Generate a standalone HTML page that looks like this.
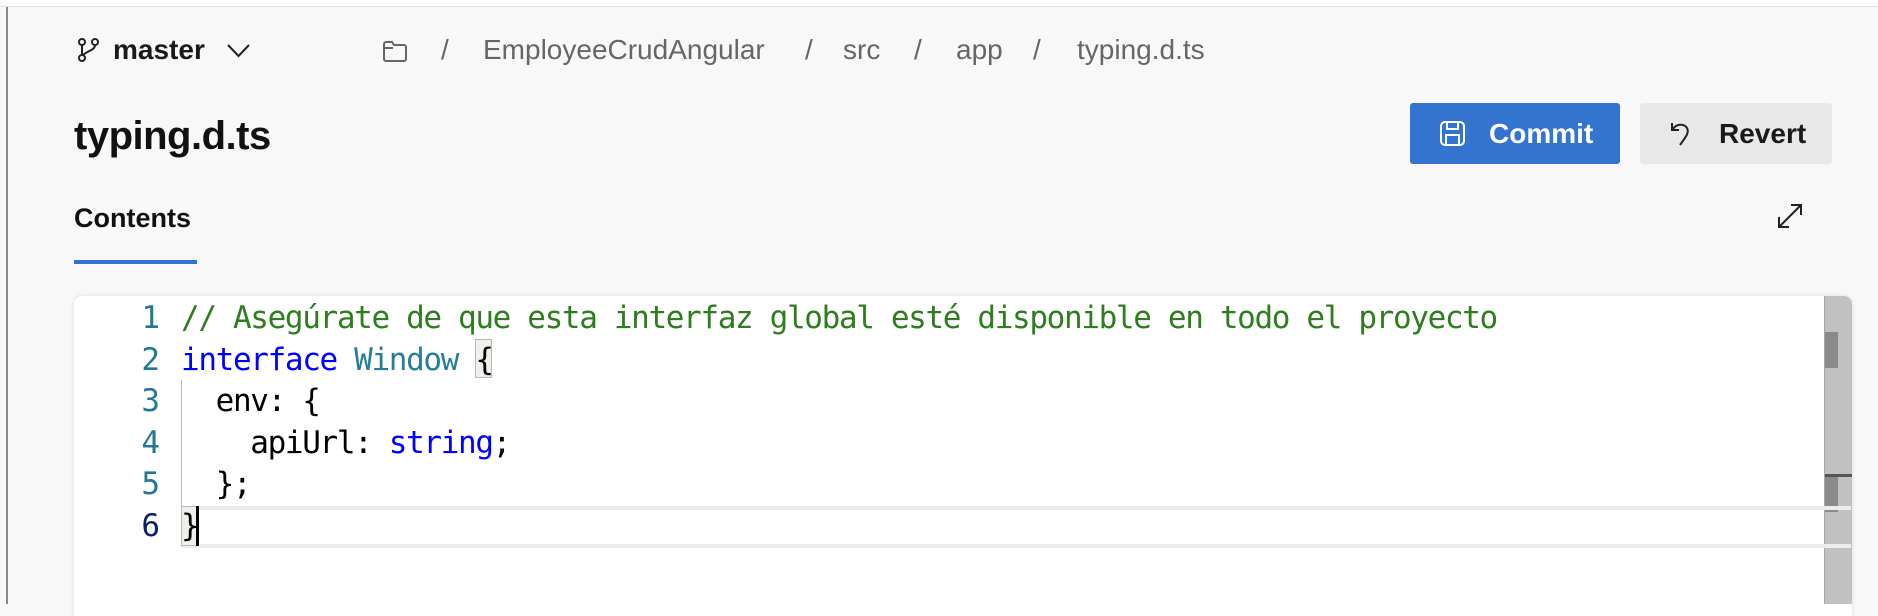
<!DOCTYPE html>
<html><head><meta charset="utf-8"><style>
*{margin:0;padding:0;box-sizing:border-box}
body{width:1878px;height:604px;overflow:hidden;background:#f8f8f8;font-family:"Liberation Sans",sans-serif;position:relative}
.a{position:absolute;white-space:nowrap}
.bc{color:#666;font-size:28px;top:34px}
.code{font-family:"DejaVu Sans Mono","Liberation Mono",monospace;font-size:31px;line-height:41.5px;letter-spacing:-1.35px}
</style></head><body>
<div class="a" style="left:0;top:0;width:1878px;height:7px;background:#fff;border-bottom:1px solid #e2e2e2"></div>
<div class="a" style="left:6px;top:7px;width:2px;height:597px;background:#8a8a8a"></div>

<svg class="a" style="left:78px;top:38px" width="24" height="24" viewBox="0 0 24 24" fill="none" stroke="#222" stroke-width="2"><circle cx="4" cy="4" r="3"/><circle cx="17" cy="4" r="3"/><circle cx="4" cy="20" r="3"/><path d="M4 7v10M17 7c0 5-6 5-12 10"/></svg>
<div class="a" style="left:113px;top:34px;font-size:28px;font-weight:bold;color:#1a1a1a">master</div>
<svg class="a" style="left:227px;top:44px" width="23" height="14" viewBox="0 0 23 14" fill="none" stroke="#222" stroke-width="2"><path d="M1 1l10.5 11L22 1"/></svg>

<svg class="a" style="left:383px;top:41px" width="24" height="22" viewBox="0 0 24 22" fill="none" stroke="#666" stroke-width="2"><path d="M3 1h6l2 3h10a2 2 0 0 1 2 2v12a2 2 0 0 1-2 2H3a2 2 0 0 1-2-2V3a2 2 0 0 1 2-2z M1 7h9"/></svg>
<div class="a bc" style="left:441px">/</div>
<div class="a bc" style="left:483px">EmployeeCrudAngular</div>
<div class="a bc" style="left:805px">/</div>
<div class="a bc" style="left:843px">src</div>
<div class="a bc" style="left:914px">/</div>
<div class="a bc" style="left:956px">app</div>
<div class="a bc" style="left:1033px">/</div>
<div class="a bc" style="left:1077px">typing.d.ts</div>

<div class="a" style="left:74px;top:114px;font-size:40px;font-weight:bold;color:#111;letter-spacing:-0.5px">typing.d.ts</div>

<div class="a" style="left:1410px;top:103px;width:210px;height:61px;background:#3374d0;border-radius:3px"></div>
<svg class="a" style="left:1440px;top:121px" width="25" height="25" viewBox="0 0 25 25" fill="none" stroke="#fff" stroke-width="2"><rect x="1" y="1" width="23" height="23" rx="4"/><path d="M7 1v7h11V1M6 24V14h13v10"/></svg>
<div class="a" style="left:1489px;top:118px;font-size:28px;font-weight:bold;color:#fff">Commit</div>

<div class="a" style="left:1640px;top:103px;width:192px;height:61px;background:#e8e8e8;border-radius:3px"></div>
<svg class="a" style="left:1670px;top:121px" width="26" height="26" viewBox="0 0 26 26" fill="none" stroke="#222" stroke-width="2"><path d="M2 2v7h7"/><path d="M3 8c3-5 11-6 14-1 3 5-3 11-7 17"/></svg>
<div class="a" style="left:1719px;top:118px;font-size:28px;font-weight:bold;color:#1a1a1a">Revert</div>

<div class="a" style="left:74px;top:203px;font-size:27px;font-weight:bold;color:#111">Contents</div>
<div class="a" style="left:74px;top:260px;width:123px;height:4px;background:#3374d0"></div>
<svg class="a" style="left:1777px;top:203px" width="26" height="26" viewBox="0 0 26 26" fill="none" stroke="#222" stroke-width="2"><path d="M2 24L24 2M14 2h10v10M2 14v10h10"/></svg>

<div class="a" style="left:74px;top:296px;width:1778px;height:320px;background:#fff;border-radius:8px 8px 0 0;box-shadow:0 0 4px rgba(0,0,0,.12)"></div>
<div class="a" style="left:1824px;top:296px;width:28px;height:308px;background:#c1c1c1;border-left:1px solid #a5a5a5;border-radius:0 8px 0 0"></div>
<div class="a" style="left:1825px;top:332px;width:13px;height:36px;background:#8a8a8a"></div>
<div class="a" style="left:1825px;top:474px;width:27px;height:3px;background:#555"></div>
<div class="a" style="left:1825px;top:477px;width:13px;height:35px;background:#8a8a8a"></div>

<div class="a" style="left:181px;top:506px;width:1670px;height:42px;border-top:4px solid #ececec;border-bottom:4px solid #ececec"></div>
<div class="a" style="left:181px;top:380px;width:1px;height:126px;background:#bbb"></div>
<div class="a" style="left:475px;top:339px;width:17px;height:39px;background:#eef0ea;border:1px solid #b8b8b8"></div>
<div class="a" style="left:181px;top:506px;width:16px;height:40px;background:#eef0ea;border:1px solid #b8b8b8"></div>
<div class="a" style="left:196px;top:506px;width:3px;height:40px;background:#000"></div>

<div class="a code" style="left:100px;top:298px;width:60px;text-align:right;color:#237893;letter-spacing:0">1<br>2<br>3<br>4<br>5<br><span style="color:#0b216f">6</span></div>
<div class="a code" style="left:181px;top:298px;color:#000;white-space:pre"><span style="color:#2e7d1e">// Asegúrate de que esta interfaz global esté disponible en todo el proyecto</span>
<span style="color:#0000ff">interface</span> <span style="color:#267f99">Window</span> {
  env: {
    apiUrl: <span style="color:#0000ff">string</span>;
  };
}</div>
</body></html>
